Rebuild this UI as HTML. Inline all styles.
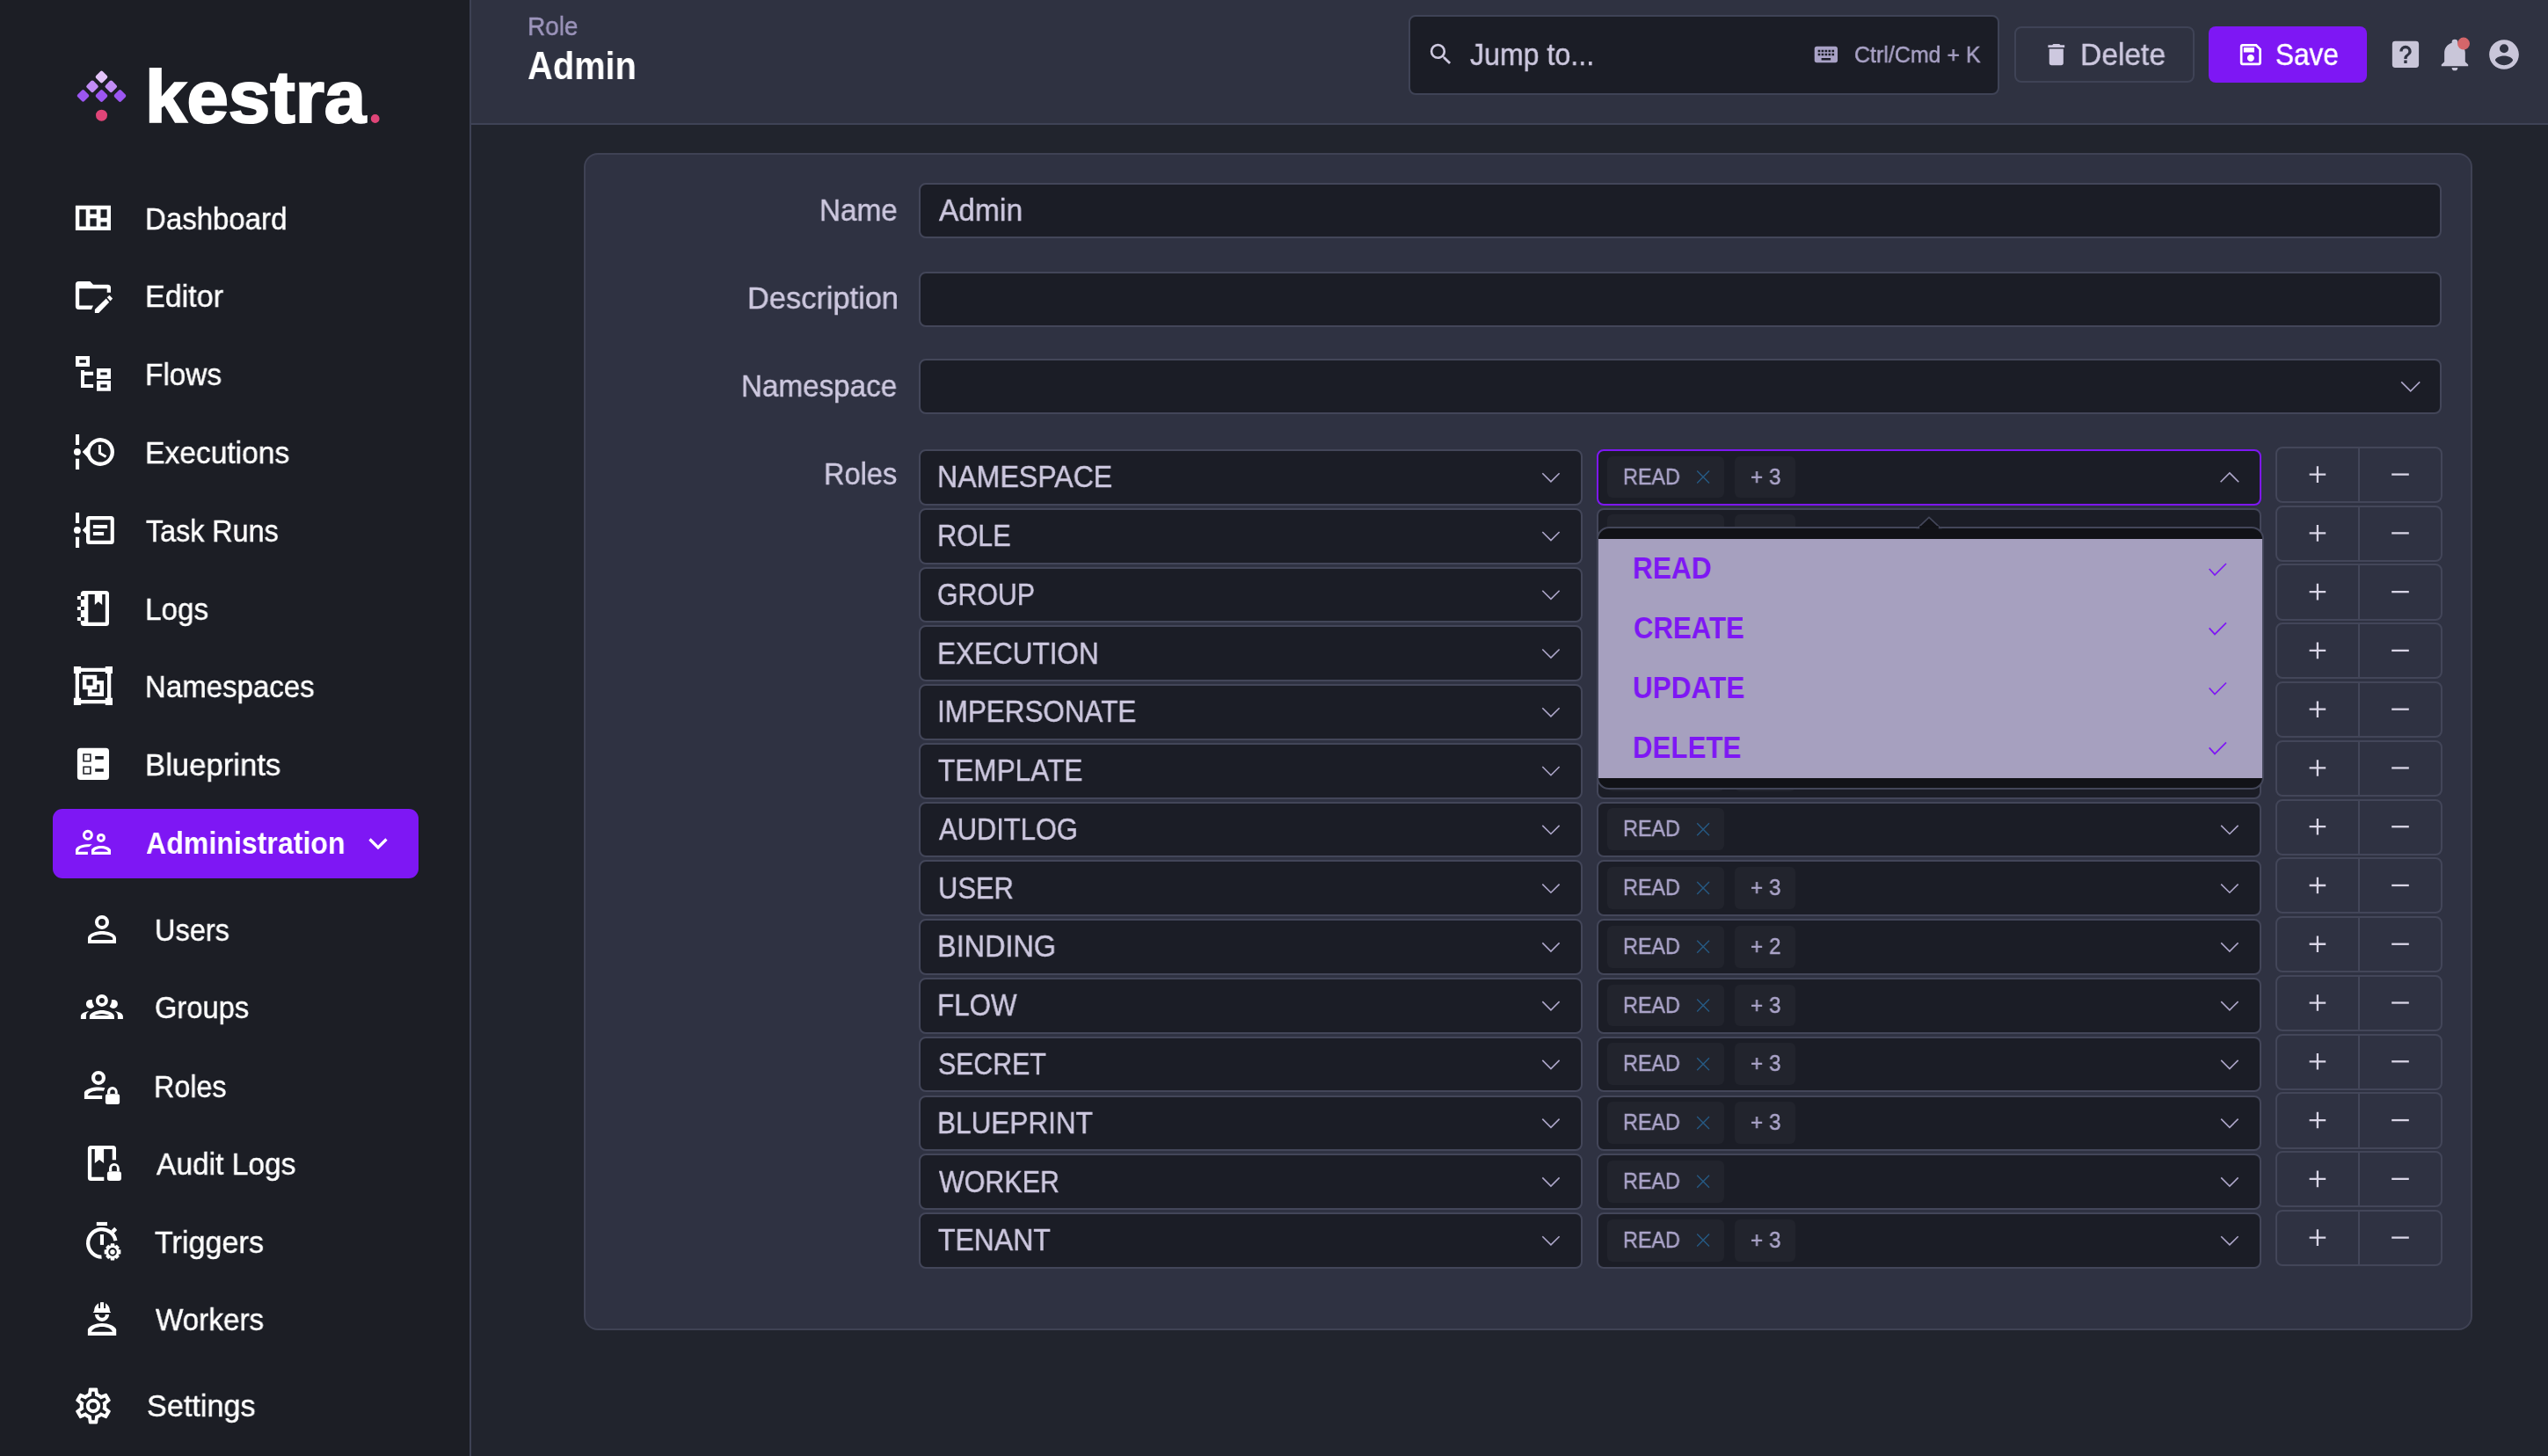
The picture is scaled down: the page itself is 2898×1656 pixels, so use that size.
<!DOCTYPE html>
<html><head><meta charset="utf-8"><style>
html,body{margin:0;padding:0;width:2898px;height:1656px;overflow:hidden;background:#21242d;}
.b{position:absolute;box-sizing:border-box;}
.t{position:absolute;white-space:pre;font-family:'Liberation Sans', sans-serif;transform-origin:0 0;z-index:5;will-change:transform;}
svg{position:absolute;left:0;top:0;}
</style></head><body>
<div class="b" style="left:0.00px;top:0.00px;width:536.00px;height:1656.00px;z-index:0;background:#1c1e25;"></div><div class="b" style="left:534.00px;top:0.00px;width:2.00px;height:1656.00px;z-index:1;background:#3d4154;"></div><div class="b" style="left:536.00px;top:0.00px;width:2362.00px;height:140.00px;z-index:0;background:#2f3241;"></div><div class="b" style="left:536.00px;top:140.00px;width:2362.00px;height:2.00px;z-index:1;background:#3f4356;"></div><div class="b" style="left:536.00px;top:142.00px;width:2362.00px;height:1514.00px;z-index:0;background:#21242d;"></div><div class="b" style="left:664.00px;top:174.00px;width:2148.00px;height:1339.00px;z-index:1;background:#2f3242;border:2px solid #3f4254;border-radius:16px;"></div><div class="b" style="left:1045.00px;top:208.40px;width:1732.30px;height:63.00px;z-index:2;background:#1b1d26;border:2px solid #434659;border-radius:8px;"></div><div class="b" style="left:1045.00px;top:308.50px;width:1732.30px;height:63.00px;z-index:2;background:#1b1d26;border:2px solid #434659;border-radius:8px;"></div><div class="b" style="left:1045.00px;top:408.40px;width:1732.30px;height:63.00px;z-index:2;background:#1b1d26;border:2px solid #434659;border-radius:8px;"></div><div class="b" style="left:1045.00px;top:511.10px;width:755.00px;height:63.70px;z-index:2;background:#1b1d26;border:2px solid #434659;border-radius:8px;"></div><div class="b" style="left:1816.00px;top:511.10px;width:756.00px;height:63.70px;z-index:2;background:#1b1d26;border:2px solid #7e17f4;border-radius:8px;"></div><div class="b" style="left:1828.20px;top:518.70px;width:132.50px;height:47.80px;z-index:3;background:#22242d;border-radius:6px;"></div><div class="b" style="left:1973.00px;top:518.70px;width:69.40px;height:47.80px;z-index:3;background:#22242d;border-radius:6px;"></div><div class="b" style="left:2588.20px;top:507.90px;width:190.30px;height:64.20px;z-index:2;background:#2f3242;border:2px solid #434659;border-radius:8px;"></div><div class="b" style="left:2682.00px;top:507.90px;width:2.00px;height:64.20px;z-index:3;background:#434659;"></div><div class="b" style="left:1045.00px;top:577.87px;width:755.00px;height:63.70px;z-index:2;background:#1b1d26;border:2px solid #434659;border-radius:8px;"></div><div class="b" style="left:1816.00px;top:577.87px;width:756.00px;height:63.70px;z-index:2;background:#1b1d26;border:2px solid #434659;border-radius:8px;"></div><div class="b" style="left:1828.20px;top:585.47px;width:132.50px;height:47.80px;z-index:3;background:#22242d;border-radius:6px;"></div><div class="b" style="left:1973.00px;top:585.47px;width:69.40px;height:47.80px;z-index:3;background:#22242d;border-radius:6px;"></div><div class="b" style="left:2588.20px;top:574.67px;width:190.30px;height:64.20px;z-index:2;background:#2f3242;border:2px solid #434659;border-radius:8px;"></div><div class="b" style="left:2682.00px;top:574.67px;width:2.00px;height:64.20px;z-index:3;background:#434659;"></div><div class="b" style="left:1045.00px;top:644.64px;width:755.00px;height:63.70px;z-index:2;background:#1b1d26;border:2px solid #434659;border-radius:8px;"></div><div class="b" style="left:1816.00px;top:644.64px;width:756.00px;height:63.70px;z-index:2;background:#1b1d26;border:2px solid #434659;border-radius:8px;"></div><div class="b" style="left:1828.20px;top:652.24px;width:132.50px;height:47.80px;z-index:3;background:#22242d;border-radius:6px;"></div><div class="b" style="left:1973.00px;top:652.24px;width:69.40px;height:47.80px;z-index:3;background:#22242d;border-radius:6px;"></div><div class="b" style="left:2588.20px;top:641.44px;width:190.30px;height:64.20px;z-index:2;background:#2f3242;border:2px solid #434659;border-radius:8px;"></div><div class="b" style="left:2682.00px;top:641.44px;width:2.00px;height:64.20px;z-index:3;background:#434659;"></div><div class="b" style="left:1045.00px;top:711.41px;width:755.00px;height:63.70px;z-index:2;background:#1b1d26;border:2px solid #434659;border-radius:8px;"></div><div class="b" style="left:1816.00px;top:711.41px;width:756.00px;height:63.70px;z-index:2;background:#1b1d26;border:2px solid #434659;border-radius:8px;"></div><div class="b" style="left:1828.20px;top:719.01px;width:132.50px;height:47.80px;z-index:3;background:#22242d;border-radius:6px;"></div><div class="b" style="left:1973.00px;top:719.01px;width:69.40px;height:47.80px;z-index:3;background:#22242d;border-radius:6px;"></div><div class="b" style="left:2588.20px;top:708.21px;width:190.30px;height:64.20px;z-index:2;background:#2f3242;border:2px solid #434659;border-radius:8px;"></div><div class="b" style="left:2682.00px;top:708.21px;width:2.00px;height:64.20px;z-index:3;background:#434659;"></div><div class="b" style="left:1045.00px;top:778.18px;width:755.00px;height:63.70px;z-index:2;background:#1b1d26;border:2px solid #434659;border-radius:8px;"></div><div class="b" style="left:1816.00px;top:778.18px;width:756.00px;height:63.70px;z-index:2;background:#1b1d26;border:2px solid #434659;border-radius:8px;"></div><div class="b" style="left:1828.20px;top:785.78px;width:132.50px;height:47.80px;z-index:3;background:#22242d;border-radius:6px;"></div><div class="b" style="left:1973.00px;top:785.78px;width:69.40px;height:47.80px;z-index:3;background:#22242d;border-radius:6px;"></div><div class="b" style="left:2588.20px;top:774.98px;width:190.30px;height:64.20px;z-index:2;background:#2f3242;border:2px solid #434659;border-radius:8px;"></div><div class="b" style="left:2682.00px;top:774.98px;width:2.00px;height:64.20px;z-index:3;background:#434659;"></div><div class="b" style="left:1045.00px;top:844.95px;width:755.00px;height:63.70px;z-index:2;background:#1b1d26;border:2px solid #434659;border-radius:8px;"></div><div class="b" style="left:1816.00px;top:844.95px;width:756.00px;height:63.70px;z-index:2;background:#1b1d26;border:2px solid #434659;border-radius:8px;"></div><div class="b" style="left:1828.20px;top:852.55px;width:132.50px;height:47.80px;z-index:3;background:#22242d;border-radius:6px;"></div><div class="b" style="left:1973.00px;top:852.55px;width:69.40px;height:47.80px;z-index:3;background:#22242d;border-radius:6px;"></div><div class="b" style="left:2588.20px;top:841.75px;width:190.30px;height:64.20px;z-index:2;background:#2f3242;border:2px solid #434659;border-radius:8px;"></div><div class="b" style="left:2682.00px;top:841.75px;width:2.00px;height:64.20px;z-index:3;background:#434659;"></div><div class="b" style="left:1045.00px;top:911.72px;width:755.00px;height:63.70px;z-index:2;background:#1b1d26;border:2px solid #434659;border-radius:8px;"></div><div class="b" style="left:1816.00px;top:911.72px;width:756.00px;height:63.70px;z-index:2;background:#1b1d26;border:2px solid #434659;border-radius:8px;"></div><div class="b" style="left:1828.20px;top:919.32px;width:132.50px;height:47.80px;z-index:3;background:#22242d;border-radius:6px;"></div><div class="b" style="left:2588.20px;top:908.52px;width:190.30px;height:64.20px;z-index:2;background:#2f3242;border:2px solid #434659;border-radius:8px;"></div><div class="b" style="left:2682.00px;top:908.52px;width:2.00px;height:64.20px;z-index:3;background:#434659;"></div><div class="b" style="left:1045.00px;top:978.49px;width:755.00px;height:63.70px;z-index:2;background:#1b1d26;border:2px solid #434659;border-radius:8px;"></div><div class="b" style="left:1816.00px;top:978.49px;width:756.00px;height:63.70px;z-index:2;background:#1b1d26;border:2px solid #434659;border-radius:8px;"></div><div class="b" style="left:1828.20px;top:986.09px;width:132.50px;height:47.80px;z-index:3;background:#22242d;border-radius:6px;"></div><div class="b" style="left:1973.00px;top:986.09px;width:69.40px;height:47.80px;z-index:3;background:#22242d;border-radius:6px;"></div><div class="b" style="left:2588.20px;top:975.29px;width:190.30px;height:64.20px;z-index:2;background:#2f3242;border:2px solid #434659;border-radius:8px;"></div><div class="b" style="left:2682.00px;top:975.29px;width:2.00px;height:64.20px;z-index:3;background:#434659;"></div><div class="b" style="left:1045.00px;top:1045.26px;width:755.00px;height:63.70px;z-index:2;background:#1b1d26;border:2px solid #434659;border-radius:8px;"></div><div class="b" style="left:1816.00px;top:1045.26px;width:756.00px;height:63.70px;z-index:2;background:#1b1d26;border:2px solid #434659;border-radius:8px;"></div><div class="b" style="left:1828.20px;top:1052.86px;width:132.50px;height:47.80px;z-index:3;background:#22242d;border-radius:6px;"></div><div class="b" style="left:1973.00px;top:1052.86px;width:69.40px;height:47.80px;z-index:3;background:#22242d;border-radius:6px;"></div><div class="b" style="left:2588.20px;top:1042.06px;width:190.30px;height:64.20px;z-index:2;background:#2f3242;border:2px solid #434659;border-radius:8px;"></div><div class="b" style="left:2682.00px;top:1042.06px;width:2.00px;height:64.20px;z-index:3;background:#434659;"></div><div class="b" style="left:1045.00px;top:1112.03px;width:755.00px;height:63.70px;z-index:2;background:#1b1d26;border:2px solid #434659;border-radius:8px;"></div><div class="b" style="left:1816.00px;top:1112.03px;width:756.00px;height:63.70px;z-index:2;background:#1b1d26;border:2px solid #434659;border-radius:8px;"></div><div class="b" style="left:1828.20px;top:1119.63px;width:132.50px;height:47.80px;z-index:3;background:#22242d;border-radius:6px;"></div><div class="b" style="left:1973.00px;top:1119.63px;width:69.40px;height:47.80px;z-index:3;background:#22242d;border-radius:6px;"></div><div class="b" style="left:2588.20px;top:1108.83px;width:190.30px;height:64.20px;z-index:2;background:#2f3242;border:2px solid #434659;border-radius:8px;"></div><div class="b" style="left:2682.00px;top:1108.83px;width:2.00px;height:64.20px;z-index:3;background:#434659;"></div><div class="b" style="left:1045.00px;top:1178.80px;width:755.00px;height:63.70px;z-index:2;background:#1b1d26;border:2px solid #434659;border-radius:8px;"></div><div class="b" style="left:1816.00px;top:1178.80px;width:756.00px;height:63.70px;z-index:2;background:#1b1d26;border:2px solid #434659;border-radius:8px;"></div><div class="b" style="left:1828.20px;top:1186.40px;width:132.50px;height:47.80px;z-index:3;background:#22242d;border-radius:6px;"></div><div class="b" style="left:1973.00px;top:1186.40px;width:69.40px;height:47.80px;z-index:3;background:#22242d;border-radius:6px;"></div><div class="b" style="left:2588.20px;top:1175.60px;width:190.30px;height:64.20px;z-index:2;background:#2f3242;border:2px solid #434659;border-radius:8px;"></div><div class="b" style="left:2682.00px;top:1175.60px;width:2.00px;height:64.20px;z-index:3;background:#434659;"></div><div class="b" style="left:1045.00px;top:1245.57px;width:755.00px;height:63.70px;z-index:2;background:#1b1d26;border:2px solid #434659;border-radius:8px;"></div><div class="b" style="left:1816.00px;top:1245.57px;width:756.00px;height:63.70px;z-index:2;background:#1b1d26;border:2px solid #434659;border-radius:8px;"></div><div class="b" style="left:1828.20px;top:1253.17px;width:132.50px;height:47.80px;z-index:3;background:#22242d;border-radius:6px;"></div><div class="b" style="left:1973.00px;top:1253.17px;width:69.40px;height:47.80px;z-index:3;background:#22242d;border-radius:6px;"></div><div class="b" style="left:2588.20px;top:1242.37px;width:190.30px;height:64.20px;z-index:2;background:#2f3242;border:2px solid #434659;border-radius:8px;"></div><div class="b" style="left:2682.00px;top:1242.37px;width:2.00px;height:64.20px;z-index:3;background:#434659;"></div><div class="b" style="left:1045.00px;top:1312.34px;width:755.00px;height:63.70px;z-index:2;background:#1b1d26;border:2px solid #434659;border-radius:8px;"></div><div class="b" style="left:1816.00px;top:1312.34px;width:756.00px;height:63.70px;z-index:2;background:#1b1d26;border:2px solid #434659;border-radius:8px;"></div><div class="b" style="left:1828.20px;top:1319.94px;width:132.50px;height:47.80px;z-index:3;background:#22242d;border-radius:6px;"></div><div class="b" style="left:2588.20px;top:1309.14px;width:190.30px;height:64.20px;z-index:2;background:#2f3242;border:2px solid #434659;border-radius:8px;"></div><div class="b" style="left:2682.00px;top:1309.14px;width:2.00px;height:64.20px;z-index:3;background:#434659;"></div><div class="b" style="left:1045.00px;top:1379.11px;width:755.00px;height:63.70px;z-index:2;background:#1b1d26;border:2px solid #434659;border-radius:8px;"></div><div class="b" style="left:1816.00px;top:1379.11px;width:756.00px;height:63.70px;z-index:2;background:#1b1d26;border:2px solid #434659;border-radius:8px;"></div><div class="b" style="left:1828.20px;top:1386.71px;width:132.50px;height:47.80px;z-index:3;background:#22242d;border-radius:6px;"></div><div class="b" style="left:1973.00px;top:1386.71px;width:69.40px;height:47.80px;z-index:3;background:#22242d;border-radius:6px;"></div><div class="b" style="left:2588.20px;top:1375.91px;width:190.30px;height:64.20px;z-index:2;background:#2f3242;border:2px solid #434659;border-radius:8px;"></div><div class="b" style="left:2682.00px;top:1375.91px;width:2.00px;height:64.20px;z-index:3;background:#434659;"></div><div class="b" style="left:60.00px;top:920.00px;width:416.00px;height:78.70px;z-index:1;background:#7e17f4;border-radius:11px;"></div><div class="b" style="left:1601.50px;top:16.50px;width:672.50px;height:91.20px;z-index:1;background:#1b1d26;border:2px solid #3f4356;border-radius:8px;"></div><div class="b" style="left:2291.20px;top:30.20px;width:204.80px;height:63.50px;z-index:1;background:#2f3241;border:2px solid #3f4356;border-radius:8px;"></div><div class="b" style="left:2512.00px;top:30.00px;width:180.00px;height:64.20px;z-index:1;background:#7e17f4;border-radius:8px;"></div><div class="b" style="left:1816.00px;top:598.60px;width:759.00px;height:299.90px;z-index:10;background:#111217;border:2px solid #434659;border-radius:14px;"></div><div class="b" style="left:1818.00px;top:612.80px;width:755.00px;height:272.20px;z-index:11;background:#a6a0bf;"></div>
<svg width="2898" height="1656" style="z-index:6"><path d="M85.9,233.8H126V262H85.9ZM90.3,238.2H97.7V257.6H90.3ZM102.4,238.2H109.7V243.6H102.4ZM102.4,248.3H109.7V257.6H102.4ZM114.5,238.2H121.6V247.7H114.5ZM114.5,252.4H121.6V257.6H114.5Z" fill="#fff" fill-rule="evenodd" /><path d="M89.5,319.9H102.4L106,323.7H122.5A3.5,3.5 0 0 1 126,327.2V332.8H121.7V328.2H90.2V347.6H106L104,351.9H89.5A3.6,3.6 0 0 1 85.9,348.3V323.5A3.6,3.6 0 0 1 89.5,319.9Z" fill="#fff" fill-rule="evenodd" /><path d="M107.9,351.9L120.7,339.6L124.2,343.7L112.3,356H107.9Z" fill="#fff" fill-rule="evenodd" /><path d="M121.7,338.2L124.5,335.8L128.1,339.4L125.5,342.4Z" fill="#fff" fill-rule="evenodd" /><path d="M86,405H102V417H86ZM90.3,409.3H97.9V412.7H90.3Z" fill="#fff" fill-rule="evenodd" /><path d="M92,421H96V422.8H106.1V427H96V436.9H106.1V440.9H92Z" fill="#fff" fill-rule="evenodd" /><path d="M110,418.9H126V430.9H110ZM114.3,423.4H121.7V426.6H114.3Z" fill="#fff" fill-rule="evenodd" /><path d="M110,433H126V444.8H110ZM114.3,437.3H121.7V440.7H114.3Z" fill="#fff" fill-rule="evenodd" /><path d="M86,494H90.1V506H86ZM86,521.8H90.1V534H86ZM83.95,514A3.95,3.95 0 1 0 91.85000000000001,514A3.95,3.95 0 1 0 83.95,514Z" fill="#fff" fill-rule="evenodd" /><path d="M93.7,514L99.3,508.2A15.9,15.9 0 1 1 99.3,519.8ZM102.5,514A11.6,11.6 0 1 0 125.69999999999999,514A11.6,11.6 0 1 0 102.5,514Z" fill="#fff" fill-rule="evenodd" /><path d="M111.9,506H115V514.6L121.3,518.3L119.8,520.8L111.9,516.2Z" fill="#fff" fill-rule="evenodd" /><path d="M86,583H90.1V595H86ZM86,610.8H90.1V623H86ZM83.95,602.9A3.95,3.95 0 1 0 91.85000000000001,602.9A3.95,3.95 0 1 0 83.95,602.9Z" fill="#fff" fill-rule="evenodd" /><path d="M101.5,586.9H126.3A3.5,3.5 0 0 1 129.8,590.4V615.4A3.5,3.5 0 0 1 126.3,618.9H101.5A3.5,3.5 0 0 1 98,615.4V607.2L93.7,602.9L98,598.6V590.4A3.5,3.5 0 0 1 101.5,586.9ZM102.3,591.2H125.7V614.7H102.3Z" fill="#fff" fill-rule="evenodd" /><path d="M105.9,596.9H122.1V601H105.9ZM105.9,605H118.1V609.1H105.9Z" fill="#fff" fill-rule="evenodd" /><path d="M95.3,672H120.5A3.5,3.5 0 0 1 124,675.5V708.5A3.5,3.5 0 0 1 120.5,712H95.3A3.5,3.5 0 0 1 91.8,708.5V675.5A3.5,3.5 0 0 1 95.3,672ZM100.3,676.1H119.8V707.7H100.3ZM92,678H95.8V681.9H92ZM92,690H95.8V694H92ZM92,702H95.8V706H92Z" fill="#fff" fill-rule="evenodd" /><path d="M87.9,678H92V681.9H87.9ZM87.9,690H92V694H87.9ZM87.9,702H92V706H87.9Z" fill="#fff" fill-rule="evenodd" /><path d="M107.8,676.1H116.2V688L111.9,684.2L107.8,688Z" fill="#fff" fill-rule="evenodd" /><path d="M83.9,757.9H92.1V766.1H83.9ZM119.8,757.9H128V766.1H119.8ZM83.9,793.8H92.1V802H83.9ZM119.8,793.8H128V802H119.8Z" fill="#fff" fill-rule="nonzero" /><path d="M92,759.7H120V764H92ZM92,796H120V800.2H92ZM85.7,766H90V794H85.7ZM122,766H126.25V794H122Z" fill="#fff" fill-rule="nonzero" /><path d="M99.8,774H118V792H99.8ZM104.6,778.5H113.4V787.4H104.6Z" fill="#fff" fill-rule="evenodd" /><path d="M93.9,767.75H110.2V784.2H93.9Z" fill="#fff" fill-rule="evenodd" /><path d="M98.4,772.4H105.5V779.5H98.4Z" fill="#1c1e25" fill-rule="evenodd" /><path d="M91.4,850.8H120.5A3.5,3.5 0 0 1 124,854.3V883.6A3.5,3.5 0 0 1 120.5,887.1H91.4A3.5,3.5 0 0 1 87.9,883.6V854.3A3.5,3.5 0 0 1 91.4,850.8ZM94.25,857.2H103.7V866.6H94.25ZM95.8,858.7H102.1V865.1H95.8ZM94.25,871.4H103.7V880.7H94.25ZM95.8,873H102.1V879.2H95.8ZM108.2,860.1H117.8V863.7H108.2ZM108.2,874.2H117.8V877.8H108.2Z" fill="#fff" fill-rule="evenodd" /><path d="M93.95,949.8A5.95,5.95 0 1 0 105.85000000000001,949.8A5.95,5.95 0 1 0 93.95,949.8ZM97.0,949.8A2.9,2.9 0 1 0 102.80000000000001,949.8A2.9,2.9 0 1 0 97.0,949.8Z" fill="#fff" fill-rule="evenodd" /><path d="M109.9,952.9A5.0,5.0 0 1 0 119.9,952.9A5.0,5.0 0 1 0 109.9,952.9ZM112.9,952.9A2.0,2.0 0 1 0 116.9,952.9A2.0,2.0 0 1 0 112.9,952.9Z" fill="#fff" fill-rule="evenodd" /><path d="M86,971.9V966.2C87.5,961.5 95,959.8 104.7,960.2L101.6,963C94,963.2 89.5,965 89,968.8H99.9V971.9Z" fill="#fff" fill-rule="evenodd" /><path d="M104,971.9V966.5C105.5,963.6 110,961.9 115,961.9C120,961.9 124.5,963.6 126,966.5V971.9Z M106.9,968.8H123.1C122,966.4 118.6,965.1 115,965.1C111.4,965.1 108,966.4 106.9,968.8Z" fill="#fff" fill-rule="evenodd" /><g transform="translate(92,1032.9) scale(2)"><path fill="#fff" fill-rule="evenodd" d="M12,4A4,4 0 0,1 16,8A4,4 0 0,1 12,12A4,4 0 0,1 8,8A4,4 0 0,1 12,4M12,6A2,2 0 0,0 10,8A2,2 0 0,0 12,10A2,2 0 0,0 14,8A2,2 0 0,0 12,6M12,13C14.67,13 20,14.33 20,17V20H4V17C4,14.33 9.33,13 12,13M12,14.9C9.03,14.9 5.9,16.36 5.9,17V18.1H18.1V17C18.1,16.36 14.97,14.9 12,14.9Z"/></g><g transform="translate(91.9,1120.9) scale(2)"><path fill="#fff" d="M12,5A3.5,3.5 0 0,0 8.5,8.5A3.5,3.5 0 0,0 12,12A3.5,3.5 0 0,0 15.5,8.5A3.5,3.5 0 0,0 12,5M12,7A1.5,1.5 0 0,1 13.5,8.5A1.5,1.5 0 0,1 12,10A1.5,1.5 0 0,1 10.5,8.5A1.5,1.5 0 0,1 12,7M5.5,8A2.5,2.5 0 0,0 3,10.5C3,11.44 3.53,12.25 4.29,12.68C4.65,12.88 5.06,13 5.5,13C5.94,13 6.35,12.88 6.71,12.68C7.08,12.47 7.39,12.17 7.62,11.81C6.89,10.86 6.5,9.7 6.5,8.5C6.5,8.41 6.5,8.31 6.5,8.22C6.2,8.08 5.86,8 5.5,8M18.5,8C18.14,8 17.8,8.08 17.5,8.22C17.5,8.31 17.5,8.41 17.5,8.5C17.5,9.7 17.11,10.86 16.38,11.81C16.5,12 16.63,12.15 16.78,12.3C16.94,12.45 17.1,12.58 17.29,12.68C17.65,12.88 18.06,13 18.5,13C18.94,13 19.35,12.88 19.71,12.68C20.47,12.25 21,11.44 21,10.5A2.5,2.5 0 0,0 18.5,8M12,14C9.66,14 5,15.17 5,17.5V19H19V17.5C19,15.17 14.34,14 12,14M4.71,14.55C2.78,14.78 0,15.76 0,17.5V19H3V17.07C3,16.06 3.69,15.22 4.71,14.55M19.29,14.55C20.31,15.22 21,16.06 21,17.07V19H24V17.5C24,15.76 21.22,14.78 19.29,14.55M12,16C13.53,16 15.24,16.5 16.23,17H7.77C8.76,16.5 10.47,16 12,16Z"/></g><path d="M104,1225.9A8,8 0 1 0 120,1225.9A8,8 0 1 0 104,1225.9ZM108.2,1225.9A3.8,3.8 0 1 0 115.8,1225.9A3.8,3.8 0 1 0 108.2,1225.9Z" fill="#fff" fill-rule="evenodd" /><path d="M95.9,1249.9V1242.2C98,1238.5 105,1236.6 112,1236.6C114.5,1236.6 117,1236.9 119.4,1237.2L117.9,1240.7C116,1240.5 114,1240.4 112,1240.4C106,1240.4 100.5,1242.5 99.8,1246H116.2V1249.9Z" fill="#fff" fill-rule="evenodd" /><path d="M122.4,1244.3H133.6A2.5,2.5 0 0 1 136.1,1246.8V1253.5A2.5,2.5 0 0 1 133.6,1256H122.4A2.5,2.5 0 0 1 119.9,1253.5V1246.8A2.5,2.5 0 0 1 122.4,1244.3Z" fill="#fff" fill-rule="evenodd" /><path d="M122,1244.3V1241.8A5.85,5.85 0 0 1 133.7,1241.8V1244.3H130.8V1242A2.75,2.75 0 0 0 125.3,1242V1244.3Z" fill="#fff" fill-rule="evenodd" /><path d="M103.4,1303H128.5A3.5,3.5 0 0 1 132,1306.5V1319.3H127.7V1307.1H104.2V1338.7H118.3V1343H103.4A3.5,3.5 0 0 1 99.9,1339.5V1306.5A3.5,3.5 0 0 1 103.4,1303Z" fill="#fff" fill-rule="evenodd" /><path d="M107.8,1307.1H118.1V1323L113,1319L107.8,1323Z" fill="#fff" fill-rule="evenodd" /><path d="M124.9,1332.3H135A3,3 0 0 1 138,1335.3V1340A3,3 0 0 1 135,1343H124.9A3,3 0 0 1 121.9,1340V1335.3A3,3 0 0 1 124.9,1332.3Z" fill="#fff" fill-rule="evenodd" /><path d="M124,1332.3V1328.9A5.9,5.9 0 0 1 135.8,1328.9V1332.3H132.9V1328.7A2.85,2.85 0 0 0 127.2,1328.7V1332.3Z" fill="#fff" fill-rule="evenodd" /><path d="M109.8,1389.9H122V1394H109.8Z" fill="#fff" fill-rule="evenodd" /><path d="M115.7,1431.8A17.9,17.9 0 1 1 133.5,1410.7L129.4,1411.5A13.7,13.7 0 1 0 115.3,1427.6Z" fill="#fff" fill-rule="evenodd" /><path d="M126.4,1399.5L130.2,1395.8L133.2,1399L129.5,1402.7Z" fill="#fff" fill-rule="evenodd" /><path d="M113.9,1404H118V1415.9H113.9Z" fill="#fff" fill-rule="evenodd" /><g transform="translate(113.6,1409.5) scale(1.2)"><path fill="#fff" fill-rule="evenodd" d="M12,8A4,4 0 0,1 16,12A4,4 0 0,1 12,16A4,4 0 0,1 8,12A4,4 0 0,1 12,8Z M12,9.7A2.3,2.3 0 1 0 12,14.3A2.3,2.3 0 1 0 12,9.7Z M10.3,4H13.7L14.2,6.4L16.1,5.3L18.5,7.7L17.4,9.6L19.8,10.1V13.9L17.4,14.4L18.5,16.3L16.1,18.7L14.2,17.6L13.7,20H10.3L9.8,17.6L7.9,18.7L5.5,16.3L6.6,14.4L4.2,13.9V10.1L6.6,9.6L5.5,7.7L7.9,5.3L9.8,6.4Z"/></g><path d="M105.7,1492.9L107,1491.3A9.7,10.5 0 0 1 112.1,1482.3V1488H114V1481.2A10,10 0 0 1 118.1,1481.2V1488H120V1482.3A9.7,10.5 0 0 1 125,1491.3L126.2,1492.9Z" fill="#fff" fill-rule="evenodd" /><path d="M108,1494.9H112.3A3.75,3.75 0 0 0 119.8,1494.9H124.1A8.05,8.05 0 0 1 108,1494.9Z" fill="#fff" fill-rule="evenodd" /><path d="M99.9,1519.1V1512C101.5,1507.8 108.5,1504.9 116,1504.9C123.5,1504.9 130.6,1507.8 132.2,1512V1519.1Z M104,1514.8H127.9C127,1511.3 121.8,1509 116,1509C110.2,1509 105,1511.3 104,1514.8Z" fill="#fff" fill-rule="evenodd" /><g transform="translate(81.5,1574.5) scale(2.04)"><path fill="#fff" d="M12,8A4,4 0 0,1 16,12A4,4 0 0,1 12,16A4,4 0 0,1 8,12A4,4 0 0,1 12,8M12,10A2,2 0 0,0 10,12A2,2 0 0,0 12,14A2,2 0 0,0 14,12A2,2 0 0,0 12,10M10,22C9.75,22 9.54,21.82 9.5,21.58L9.13,18.93C8.5,18.68 7.96,18.34 7.44,17.94L4.95,18.95C4.73,19.03 4.46,18.95 4.34,18.73L2.34,15.27C2.21,15.05 2.27,14.78 2.46,14.63L4.57,12.97L4.5,12L4.57,11L2.46,9.37C2.27,9.22 2.21,8.95 2.34,8.73L4.34,5.27C4.46,5.05 4.73,4.96 4.95,5.05L7.44,6.05C7.96,5.66 8.5,5.32 9.13,5.07L9.5,2.42C9.54,2.18 9.75,2 10,2H14C14.25,2 14.46,2.18 14.5,2.42L14.87,5.07C15.5,5.32 16.04,5.66 16.56,6.05L19.05,5.05C19.27,4.96 19.54,5.05 19.66,5.27L21.66,8.73C21.79,8.95 21.73,9.22 21.54,9.37L19.43,11L19.5,12L19.43,13L21.54,14.63C21.73,14.78 21.79,15.05 21.66,15.27L19.66,18.73C19.54,18.95 19.27,19.04 19.05,18.95L16.56,17.95C16.04,18.34 15.5,18.68 14.87,18.93L14.5,21.58C14.46,21.82 14.25,22 14,22H10M11.25,4L10.88,6.61C9.68,6.86 8.62,7.5 7.85,8.39L5.44,7.35L4.69,8.65L6.8,10.2C6.4,11.37 6.4,12.64 6.8,13.8L4.68,15.36L5.43,16.66L7.86,15.62C8.63,16.5 9.68,17.14 10.87,17.38L11.24,20H12.76L13.13,17.39C14.32,17.14 15.37,16.5 16.14,15.62L18.57,16.66L19.32,15.36L17.2,13.81C17.6,12.64 17.6,11.37 17.2,10.2L19.31,8.65L18.56,7.35L16.15,8.39C15.38,7.5 14.32,6.86 13.12,6.62L12.75,4H11.25Z"/></g><path d="M420.5,954.5L430,964L439.5,954.5" fill="none" stroke="#fff" stroke-width="3.2" /><g transform="translate(1622.8,45.8) scale(1.33)"><path fill="#cdc8df" d="M9.5,3A6.5,6.5 0 0,1 16,9.5C16,11.11 15.41,12.59 14.44,13.73L14.71,14H15.5L20.5,19L19,20.5L14,15.5V14.71L13.73,14.44C12.59,15.41 11.11,16 9.5,16A6.5,6.5 0 0,1 3,9.5A6.5,6.5 0 0,1 9.5,3M9.5,5C7,5 5,7 5,9.5C5,12 7,14 9.5,14C12,14 14,12 14,9.5C14,7 12,5 9.5,5Z"/></g><g transform="translate(2061.1,46.2) scale(1.315)"><path fill="#a9a2c6" d="M19,10H17V8H19M19,13H17V11H19M16,10H14V8H16M16,13H14V11H16M16,17H8V15H16M7,10H5V8H7M7,13H5V11H7M8,11H10V13H8M8,8H10V10H8M11,11H13V13H11M11,8H13V10H11M20,5H4C2.89,5 2,5.89 2,7V17A2,2 0 0,0 4,19H20A2,2 0 0,0 22,17V7C22,5.89 21.1,5 20,5Z"/></g><g transform="translate(2322.7,46) scale(1.34)"><path fill="#cdc8df" d="M19,4H15.5L14.5,3H9.5L8.5,4H5V6H19M6,19A2,2 0 0,0 8,21H16A2,2 0 0,0 18,19V7H6V19Z"/></g><g transform="translate(2543.8,46) scale(1.34)"><path fill="#fff" d="M17 3H5C3.89 3 3 3.9 3 5V19C3 20.1 3.89 21 5 21H19C20.1 21 21 20.1 21 19V7L17 3M19 19H5V5H16.17L19 7.83V19M12 12C10.34 12 9 13.34 9 15S10.34 18 12 18 15 16.66 15 15 13.66 12 12 12M6 6H15V10H6V6Z"/></g><g transform="translate(2715.8,41.7) scale(1.68)"><path fill="#c9c6d9" fill-rule="evenodd" d="M5,3H19A2,2 0 0,1 21,5V19A2,2 0 0,1 19,21H5A2,2 0 0,1 3,19V5A2,2 0 0,1 5,3Z M11,18H13V16H11V18Z M12,6A4,4 0 0,0 8,10H10A2,2 0 0,1 12,8A2,2 0 0,1 14,10C14,12 11,11.75 11,15H13C13,12.75 16,12.5 16,10A4,4 0 0,0 12,6Z"/></g><g transform="translate(2771.7,41.4) scale(1.69)"><path fill="#c9c6d9" d="M21,19V20H3V19L5,17V11C5,7.9 7.03,5.17 10,4.29C10,4.19 10,4.1 10,4A2,2 0 0,1 12,2A2,2 0 0,1 14,4C14,4.1 14,4.19 14,4.29C16.97,5.17 19,7.9 19,11V17L21,19M14,21A2,2 0 0,1 12,23A2,2 0 0,1 10,21"/></g><path d="M2795,49.6A7,7 0 1 0 2809,49.6A7,7 0 1 0 2795,49.6Z" fill="#d4666a" fill-rule="evenodd" /><g transform="translate(2827.8,41.8) scale(1.685)"><path fill="#c9c6d9" d="M12,19.2C9.5,19.2 7.29,17.92 6,16C6.03,14 10,12.9 12,12.9C14,12.9 17.97,14 18,16C16.71,17.92 14.5,19.2 12,19.2M12,5A3,3 0 0,1 15,8A3,3 0 0,1 12,11A3,3 0 0,1 9,8A3,3 0 0,1 12,5M12,2A10,10 0 0,0 2,12A10,10 0 0,0 12,22A10,10 0 0,0 22,12C22,6.47 17.5,2 12,2Z"/></g><path d="M2731.2,434.4L2741.7,444.9L2752.2,434.4" fill="none" stroke="#aea7ca" stroke-width="1.6" /><path d="M1754.3,538.20L1763.95,547.85L1773.6,538.20" fill="none" stroke="#aea7ca" stroke-width="1.6" /><path d="M2525.6,548.20L2535.9,537.90L2546.2,548.20" fill="none" stroke="#aea7ca" stroke-width="1.6" /><path d="M1930.2,535.60L1944,549.60M1944,535.60L1930.2,549.60" fill="none" stroke="#265a84" stroke-width="1.4" /><path d="M2626.6,539.60H2645.2M2635.9,530.30V548.90" fill="none" stroke="#d9d5e6" stroke-width="2.3" /><path d="M2720.2,539.60H2739.8" fill="none" stroke="#d9d5e6" stroke-width="2.3" /><path d="M1754.3,604.97L1763.95,614.62L1773.6,604.97" fill="none" stroke="#aea7ca" stroke-width="1.6" /><path d="M2626.6,606.37H2645.2M2635.9,597.07V615.67" fill="none" stroke="#d9d5e6" stroke-width="2.3" /><path d="M2720.2,606.37H2739.8" fill="none" stroke="#d9d5e6" stroke-width="2.3" /><path d="M1754.3,671.74L1763.95,681.39L1773.6,671.74" fill="none" stroke="#aea7ca" stroke-width="1.6" /><path d="M2626.6,673.14H2645.2M2635.9,663.84V682.44" fill="none" stroke="#d9d5e6" stroke-width="2.3" /><path d="M2720.2,673.14H2739.8" fill="none" stroke="#d9d5e6" stroke-width="2.3" /><path d="M1754.3,738.51L1763.95,748.16L1773.6,738.51" fill="none" stroke="#aea7ca" stroke-width="1.6" /><path d="M2626.6,739.91H2645.2M2635.9,730.61V749.21" fill="none" stroke="#d9d5e6" stroke-width="2.3" /><path d="M2720.2,739.91H2739.8" fill="none" stroke="#d9d5e6" stroke-width="2.3" /><path d="M1754.3,805.28L1763.95,814.93L1773.6,805.28" fill="none" stroke="#aea7ca" stroke-width="1.6" /><path d="M2626.6,806.68H2645.2M2635.9,797.38V815.98" fill="none" stroke="#d9d5e6" stroke-width="2.3" /><path d="M2720.2,806.68H2739.8" fill="none" stroke="#d9d5e6" stroke-width="2.3" /><path d="M1754.3,872.05L1763.95,881.70L1773.6,872.05" fill="none" stroke="#aea7ca" stroke-width="1.6" /><path d="M2626.6,873.45H2645.2M2635.9,864.15V882.75" fill="none" stroke="#d9d5e6" stroke-width="2.3" /><path d="M2720.2,873.45H2739.8" fill="none" stroke="#d9d5e6" stroke-width="2.3" /><path d="M1754.3,938.82L1763.95,948.47L1773.6,938.82" fill="none" stroke="#aea7ca" stroke-width="1.6" /><path d="M2526.2,938.82L2535.9,948.47L2545.6,938.82" fill="none" stroke="#aea7ca" stroke-width="1.6" /><path d="M1930.2,936.22L1944,950.22M1944,936.22L1930.2,950.22" fill="none" stroke="#265a84" stroke-width="1.4" /><path d="M2626.6,940.22H2645.2M2635.9,930.92V949.52" fill="none" stroke="#d9d5e6" stroke-width="2.3" /><path d="M2720.2,940.22H2739.8" fill="none" stroke="#d9d5e6" stroke-width="2.3" /><path d="M1754.3,1005.59L1763.95,1015.24L1773.6,1005.59" fill="none" stroke="#aea7ca" stroke-width="1.6" /><path d="M2526.2,1005.59L2535.9,1015.24L2545.6,1005.59" fill="none" stroke="#aea7ca" stroke-width="1.6" /><path d="M1930.2,1002.99L1944,1016.99M1944,1002.99L1930.2,1016.99" fill="none" stroke="#265a84" stroke-width="1.4" /><path d="M2626.6,1006.99H2645.2M2635.9,997.69V1016.29" fill="none" stroke="#d9d5e6" stroke-width="2.3" /><path d="M2720.2,1006.99H2739.8" fill="none" stroke="#d9d5e6" stroke-width="2.3" /><path d="M1754.3,1072.36L1763.95,1082.01L1773.6,1072.36" fill="none" stroke="#aea7ca" stroke-width="1.6" /><path d="M2526.2,1072.36L2535.9,1082.01L2545.6,1072.36" fill="none" stroke="#aea7ca" stroke-width="1.6" /><path d="M1930.2,1069.76L1944,1083.76M1944,1069.76L1930.2,1083.76" fill="none" stroke="#265a84" stroke-width="1.4" /><path d="M2626.6,1073.76H2645.2M2635.9,1064.46V1083.06" fill="none" stroke="#d9d5e6" stroke-width="2.3" /><path d="M2720.2,1073.76H2739.8" fill="none" stroke="#d9d5e6" stroke-width="2.3" /><path d="M1754.3,1139.13L1763.95,1148.78L1773.6,1139.13" fill="none" stroke="#aea7ca" stroke-width="1.6" /><path d="M2526.2,1139.13L2535.9,1148.78L2545.6,1139.13" fill="none" stroke="#aea7ca" stroke-width="1.6" /><path d="M1930.2,1136.53L1944,1150.53M1944,1136.53L1930.2,1150.53" fill="none" stroke="#265a84" stroke-width="1.4" /><path d="M2626.6,1140.53H2645.2M2635.9,1131.23V1149.83" fill="none" stroke="#d9d5e6" stroke-width="2.3" /><path d="M2720.2,1140.53H2739.8" fill="none" stroke="#d9d5e6" stroke-width="2.3" /><path d="M1754.3,1205.90L1763.95,1215.55L1773.6,1205.90" fill="none" stroke="#aea7ca" stroke-width="1.6" /><path d="M2526.2,1205.90L2535.9,1215.55L2545.6,1205.90" fill="none" stroke="#aea7ca" stroke-width="1.6" /><path d="M1930.2,1203.30L1944,1217.30M1944,1203.30L1930.2,1217.30" fill="none" stroke="#265a84" stroke-width="1.4" /><path d="M2626.6,1207.30H2645.2M2635.9,1198.00V1216.60" fill="none" stroke="#d9d5e6" stroke-width="2.3" /><path d="M2720.2,1207.30H2739.8" fill="none" stroke="#d9d5e6" stroke-width="2.3" /><path d="M1754.3,1272.67L1763.95,1282.32L1773.6,1272.67" fill="none" stroke="#aea7ca" stroke-width="1.6" /><path d="M2526.2,1272.67L2535.9,1282.32L2545.6,1272.67" fill="none" stroke="#aea7ca" stroke-width="1.6" /><path d="M1930.2,1270.07L1944,1284.07M1944,1270.07L1930.2,1284.07" fill="none" stroke="#265a84" stroke-width="1.4" /><path d="M2626.6,1274.07H2645.2M2635.9,1264.77V1283.37" fill="none" stroke="#d9d5e6" stroke-width="2.3" /><path d="M2720.2,1274.07H2739.8" fill="none" stroke="#d9d5e6" stroke-width="2.3" /><path d="M1754.3,1339.44L1763.95,1349.09L1773.6,1339.44" fill="none" stroke="#aea7ca" stroke-width="1.6" /><path d="M2526.2,1339.44L2535.9,1349.09L2545.6,1339.44" fill="none" stroke="#aea7ca" stroke-width="1.6" /><path d="M1930.2,1336.84L1944,1350.84M1944,1336.84L1930.2,1350.84" fill="none" stroke="#265a84" stroke-width="1.4" /><path d="M2626.6,1340.84H2645.2M2635.9,1331.54V1350.14" fill="none" stroke="#d9d5e6" stroke-width="2.3" /><path d="M2720.2,1340.84H2739.8" fill="none" stroke="#d9d5e6" stroke-width="2.3" /><path d="M1754.3,1406.21L1763.95,1415.86L1773.6,1406.21" fill="none" stroke="#aea7ca" stroke-width="1.6" /><path d="M2526.2,1406.21L2535.9,1415.86L2545.6,1406.21" fill="none" stroke="#aea7ca" stroke-width="1.6" /><path d="M1930.2,1403.61L1944,1417.61M1944,1403.61L1930.2,1417.61" fill="none" stroke="#265a84" stroke-width="1.4" /><path d="M2626.6,1407.61H2645.2M2635.9,1398.31V1416.91" fill="none" stroke="#d9d5e6" stroke-width="2.3" /><path d="M2720.2,1407.61H2739.8" fill="none" stroke="#d9d5e6" stroke-width="2.3" /><rect x="110.13" y="82.13" width="10.75" height="10.75" rx="2" fill="#e3c3f9" transform="rotate(45 115.5 87.5)"/><rect x="99.63" y="92.93" width="10.75" height="10.75" rx="2" fill="#c18cf5" transform="rotate(45 105 98.3)"/><rect x="120.93" y="92.93" width="10.75" height="10.75" rx="2" fill="#c18cf5" transform="rotate(45 126.3 98.3)"/><rect x="89.13" y="103.53" width="10.75" height="10.75" rx="2" fill="#9c56f2" transform="rotate(45 94.5 108.9)"/><rect x="110.13" y="103.63" width="10.75" height="10.75" rx="2" fill="#9c56f2" transform="rotate(45 115.5 109)"/><rect x="131.13" y="103.63" width="10.75" height="10.75" rx="2" fill="#9c56f2" transform="rotate(45 136.5 109)"/><path d="M109.0,131.2A6.5,6.5 0 1 0 122.0,131.2A6.5,6.5 0 1 0 109.0,131.2Z" fill="#e04578" fill-rule="evenodd" /><path d="M421.8,135A4.9,4.9 0 1 0 431.59999999999997,135A4.9,4.9 0 1 0 421.8,135Z" fill="#e04578" fill-rule="evenodd" /></svg>
<div class="t" style="left:165.21px;top:232.20px;font-size:35.5px;line-height:35.5px;font-weight:normal;color:#ffffff;z-index:5;transform:scaleX(0.9296);-webkit-text-stroke:0.45px #ffffff">Dashboard</div><div class="t" style="left:165.12px;top:320.40px;font-size:35.5px;line-height:35.5px;font-weight:normal;color:#ffffff;z-index:5;transform:scaleX(0.9589);-webkit-text-stroke:0.45px #ffffff">Editor</div><div class="t" style="left:165.18px;top:409.40px;font-size:35.5px;line-height:35.5px;font-weight:normal;color:#ffffff;z-index:5;transform:scaleX(0.9393);-webkit-text-stroke:0.45px #ffffff">Flows</div><div class="t" style="left:165.16px;top:498.30px;font-size:35.5px;line-height:35.5px;font-weight:normal;color:#ffffff;z-index:5;transform:scaleX(0.9453);-webkit-text-stroke:0.45px #ffffff">Executions</div><div class="t" style="left:166.10px;top:587.00px;font-size:35.5px;line-height:35.5px;font-weight:normal;color:#ffffff;z-index:5;transform:scaleX(0.9097);-webkit-text-stroke:0.45px #ffffff">Task Runs</div><div class="t" style="left:165.39px;top:676.00px;font-size:35.5px;line-height:35.5px;font-weight:normal;color:#ffffff;z-index:5;transform:scaleX(0.9370);-webkit-text-stroke:0.45px #ffffff">Logs</div><div class="t" style="left:165.21px;top:764.20px;font-size:35.5px;line-height:35.5px;font-weight:normal;color:#ffffff;z-index:5;transform:scaleX(0.9296);-webkit-text-stroke:0.45px #ffffff">Namespaces</div><div class="t" style="left:165.07px;top:853.40px;font-size:35.5px;line-height:35.5px;font-weight:normal;color:#ffffff;z-index:5;transform:scaleX(0.9779);-webkit-text-stroke:0.45px #ffffff">Blueprints</div><div class="t" style="left:166.10px;top:942.40px;font-size:35.5px;line-height:35.5px;font-weight:bold;color:#ffffff;z-index:5;transform:scaleX(0.9048)">Administration</div><div class="t" style="left:176.27px;top:1041.00px;font-size:35.5px;line-height:35.5px;font-weight:normal;color:#ffffff;z-index:5;transform:scaleX(0.9156);-webkit-text-stroke:0.45px #ffffff">Users</div><div class="t" style="left:176.08px;top:1129.00px;font-size:35.5px;line-height:35.5px;font-weight:normal;color:#ffffff;z-index:5;transform:scaleX(0.9200);-webkit-text-stroke:0.45px #ffffff">Groups</div><div class="t" style="left:175.37px;top:1218.50px;font-size:35.5px;line-height:35.5px;font-weight:normal;color:#ffffff;z-index:5;transform:scaleX(0.9092);-webkit-text-stroke:0.45px #ffffff">Roles</div><div class="t" style="left:177.50px;top:1307.00px;font-size:35.5px;line-height:35.5px;font-weight:normal;color:#ffffff;z-index:5;transform:scaleX(0.9443);-webkit-text-stroke:0.45px #ffffff">Audit Logs</div><div class="t" style="left:176.30px;top:1396.00px;font-size:35.5px;line-height:35.5px;font-weight:normal;color:#ffffff;z-index:5;transform:scaleX(0.9617);-webkit-text-stroke:0.45px #ffffff">Triggers</div><div class="t" style="left:176.80px;top:1484.20px;font-size:35.5px;line-height:35.5px;font-weight:normal;color:#ffffff;z-index:5;transform:scaleX(0.9359);-webkit-text-stroke:0.45px #ffffff">Workers</div><div class="t" style="left:166.74px;top:1582.30px;font-size:35.5px;line-height:35.5px;font-weight:normal;color:#ffffff;z-index:5;transform:scaleX(0.9635);-webkit-text-stroke:0.45px #ffffff">Settings</div><div class="t" style="left:599.93px;top:14.63px;font-size:29.9px;line-height:29.9px;font-weight:normal;color:#9d95bc;z-index:5;transform:scaleX(0.9356);-webkit-text-stroke:0.45px #9d95bc">Role</div><div class="t" style="left:599.69px;top:52.99px;font-size:43.8px;line-height:43.8px;font-weight:bold;color:#ffffff;z-index:5;transform:scaleX(0.9090)">Admin</div><div class="t" style="left:1671.80px;top:44.02px;font-size:35px;line-height:35px;font-weight:normal;color:#cdc8df;z-index:5;transform:scaleX(0.9185);-webkit-text-stroke:0.45px #cdc8df">Jump to...</div><div class="t" style="left:2108.94px;top:49.03px;font-size:26px;line-height:26px;font-weight:normal;color:#aaa3c7;z-index:5;transform:scaleX(0.9601);-webkit-text-stroke:0.45px #aaa3c7">Ctrl/Cmd + K</div><div class="t" style="left:2366.14px;top:43.86px;font-size:35.2px;line-height:35.2px;font-weight:normal;color:#cdc8df;z-index:5;transform:scaleX(0.9541);-webkit-text-stroke:0.45px #cdc8df">Delete</div><div class="t" style="left:2588.11px;top:43.86px;font-size:35.2px;line-height:35.2px;font-weight:normal;color:#ffffff;z-index:5;transform:scaleX(0.8949);-webkit-text-stroke:0.45px #ffffff">Save</div><div class="t" style="left:932.38px;top:222.49px;font-size:35.4px;line-height:35.4px;font-weight:normal;color:#cdc8df;z-index:5;transform:scaleX(0.9400);-webkit-text-stroke:0.45px #cdc8df">Name</div><div class="t" style="left:849.79px;top:322.49px;font-size:35.4px;line-height:35.4px;font-weight:normal;color:#cdc8df;z-index:5;transform:scaleX(0.9715);-webkit-text-stroke:0.45px #cdc8df">Description</div><div class="t" style="left:843.44px;top:422.29px;font-size:35.4px;line-height:35.4px;font-weight:normal;color:#cdc8df;z-index:5;transform:scaleX(0.9381);-webkit-text-stroke:0.45px #cdc8df">Namespace</div><div class="t" style="left:936.94px;top:522.39px;font-size:35.4px;line-height:35.4px;font-weight:normal;color:#cdc8df;z-index:5;transform:scaleX(0.9207);-webkit-text-stroke:0.45px #cdc8df">Roles</div><div class="t" style="left:1067.90px;top:222.49px;font-size:35.4px;line-height:35.4px;font-weight:normal;color:#cdc8df;z-index:5;transform:scaleX(0.9465);-webkit-text-stroke:0.45px #cdc8df">Admin</div><div class="t" style="left:1065.59px;top:525.30px;font-size:35.5px;line-height:35.5px;font-weight:normal;color:#cdc8df;z-index:5;transform:scaleX(0.9046);-webkit-text-stroke:0.45px #cdc8df">NAMESPACE</div><div class="t" style="left:1845.59px;top:529.60px;font-size:25.8px;line-height:25.8px;font-weight:normal;color:#aba4c9;z-index:5;transform:scaleX(0.9058);-webkit-text-stroke:0.45px #aba4c9">READ</div><div class="t" style="left:1990.66px;top:529.60px;font-size:25.8px;line-height:25.8px;font-weight:normal;color:#aba4c9;z-index:5;transform:scaleX(0.9429);-webkit-text-stroke:0.45px #aba4c9">+ 3</div><div class="t" style="left:1065.70px;top:592.07px;font-size:35.5px;line-height:35.5px;font-weight:normal;color:#cdc8df;z-index:5;transform:scaleX(0.8656);-webkit-text-stroke:0.45px #cdc8df">ROLE</div><div class="t" style="left:1066.35px;top:658.84px;font-size:35.5px;line-height:35.5px;font-weight:normal;color:#cdc8df;z-index:5;transform:scaleX(0.8531);-webkit-text-stroke:0.45px #cdc8df">GROUP</div><div class="t" style="left:1065.64px;top:725.61px;font-size:35.5px;line-height:35.5px;font-weight:normal;color:#cdc8df;z-index:5;transform:scaleX(0.8866);-webkit-text-stroke:0.45px #cdc8df">EXECUTION</div><div class="t" style="left:1065.65px;top:792.38px;font-size:35.5px;line-height:35.5px;font-weight:normal;color:#cdc8df;z-index:5;transform:scaleX(0.8849);-webkit-text-stroke:0.45px #cdc8df">IMPERSONATE</div><div class="t" style="left:1067.20px;top:859.15px;font-size:35.5px;line-height:35.5px;font-weight:normal;color:#cdc8df;z-index:5;transform:scaleX(0.8897);-webkit-text-stroke:0.45px #cdc8df">TEMPLATE</div><div class="t" style="left:1068.30px;top:925.92px;font-size:35.5px;line-height:35.5px;font-weight:normal;color:#cdc8df;z-index:5;transform:scaleX(0.8704);-webkit-text-stroke:0.45px #cdc8df">AUDITLOG</div><div class="t" style="left:1845.59px;top:930.22px;font-size:25.8px;line-height:25.8px;font-weight:normal;color:#aba4c9;z-index:5;transform:scaleX(0.9058);-webkit-text-stroke:0.45px #aba4c9">READ</div><div class="t" style="left:1066.56px;top:992.69px;font-size:35.5px;line-height:35.5px;font-weight:normal;color:#cdc8df;z-index:5;transform:scaleX(0.8705);-webkit-text-stroke:0.45px #cdc8df">USER</div><div class="t" style="left:1845.59px;top:996.99px;font-size:25.8px;line-height:25.8px;font-weight:normal;color:#aba4c9;z-index:5;transform:scaleX(0.9058);-webkit-text-stroke:0.45px #aba4c9">READ</div><div class="t" style="left:1990.66px;top:996.99px;font-size:25.8px;line-height:25.8px;font-weight:normal;color:#aba4c9;z-index:5;transform:scaleX(0.9429);-webkit-text-stroke:0.45px #aba4c9">+ 3</div><div class="t" style="left:1065.56px;top:1059.46px;font-size:35.5px;line-height:35.5px;font-weight:normal;color:#cdc8df;z-index:5;transform:scaleX(0.9126);-webkit-text-stroke:0.45px #cdc8df">BINDING</div><div class="t" style="left:1845.59px;top:1063.76px;font-size:25.8px;line-height:25.8px;font-weight:normal;color:#aba4c9;z-index:5;transform:scaleX(0.9058);-webkit-text-stroke:0.45px #aba4c9">READ</div><div class="t" style="left:1990.66px;top:1063.76px;font-size:25.8px;line-height:25.8px;font-weight:normal;color:#aba4c9;z-index:5;transform:scaleX(0.9429);-webkit-text-stroke:0.45px #aba4c9">+ 2</div><div class="t" style="left:1065.65px;top:1126.23px;font-size:35.5px;line-height:35.5px;font-weight:normal;color:#cdc8df;z-index:5;transform:scaleX(0.8830);-webkit-text-stroke:0.45px #cdc8df">FLOW</div><div class="t" style="left:1845.59px;top:1130.53px;font-size:25.8px;line-height:25.8px;font-weight:normal;color:#aba4c9;z-index:5;transform:scaleX(0.9058);-webkit-text-stroke:0.45px #aba4c9">READ</div><div class="t" style="left:1990.66px;top:1130.53px;font-size:25.8px;line-height:25.8px;font-weight:normal;color:#aba4c9;z-index:5;transform:scaleX(0.9429);-webkit-text-stroke:0.45px #aba4c9">+ 3</div><div class="t" style="left:1067.45px;top:1193.00px;font-size:35.5px;line-height:35.5px;font-weight:normal;color:#cdc8df;z-index:5;transform:scaleX(0.8524);-webkit-text-stroke:0.45px #cdc8df">SECRET</div><div class="t" style="left:1845.59px;top:1197.30px;font-size:25.8px;line-height:25.8px;font-weight:normal;color:#aba4c9;z-index:5;transform:scaleX(0.9058);-webkit-text-stroke:0.45px #aba4c9">READ</div><div class="t" style="left:1990.66px;top:1197.30px;font-size:25.8px;line-height:25.8px;font-weight:normal;color:#aba4c9;z-index:5;transform:scaleX(0.9429);-webkit-text-stroke:0.45px #aba4c9">+ 3</div><div class="t" style="left:1065.64px;top:1259.77px;font-size:35.5px;line-height:35.5px;font-weight:normal;color:#cdc8df;z-index:5;transform:scaleX(0.8878);-webkit-text-stroke:0.45px #cdc8df">BLUEPRINT</div><div class="t" style="left:1845.59px;top:1264.07px;font-size:25.8px;line-height:25.8px;font-weight:normal;color:#aba4c9;z-index:5;transform:scaleX(0.9058);-webkit-text-stroke:0.45px #aba4c9">READ</div><div class="t" style="left:1990.66px;top:1264.07px;font-size:25.8px;line-height:25.8px;font-weight:normal;color:#aba4c9;z-index:5;transform:scaleX(0.9429);-webkit-text-stroke:0.45px #aba4c9">+ 3</div><div class="t" style="left:1068.30px;top:1326.54px;font-size:35.5px;line-height:35.5px;font-weight:normal;color:#cdc8df;z-index:5;transform:scaleX(0.8576);-webkit-text-stroke:0.45px #cdc8df">WORKER</div><div class="t" style="left:1845.59px;top:1330.84px;font-size:25.8px;line-height:25.8px;font-weight:normal;color:#aba4c9;z-index:5;transform:scaleX(0.9058);-webkit-text-stroke:0.45px #aba4c9">READ</div><div class="t" style="left:1067.20px;top:1393.31px;font-size:35.5px;line-height:35.5px;font-weight:normal;color:#cdc8df;z-index:5;transform:scaleX(0.9000);-webkit-text-stroke:0.45px #cdc8df">TENANT</div><div class="t" style="left:1845.59px;top:1397.61px;font-size:25.8px;line-height:25.8px;font-weight:normal;color:#aba4c9;z-index:5;transform:scaleX(0.9058);-webkit-text-stroke:0.45px #aba4c9">READ</div><div class="t" style="left:1990.66px;top:1397.61px;font-size:25.8px;line-height:25.8px;font-weight:normal;color:#aba4c9;z-index:5;transform:scaleX(0.9429);-webkit-text-stroke:0.45px #aba4c9">+ 3</div><div class="t" style="left:1857.22px;top:629.33px;font-size:35.7px;line-height:35.7px;font-weight:bold;color:#7e17f4;z-index:13;transform:scaleX(0.8878)">READ</div><div class="t" style="left:1858.13px;top:696.73px;font-size:35.7px;line-height:35.7px;font-weight:bold;color:#7e17f4;z-index:13;transform:scaleX(0.8732)">CREATE</div><div class="t" style="left:1857.23px;top:764.83px;font-size:35.7px;line-height:35.7px;font-weight:bold;color:#7e17f4;z-index:13;transform:scaleX(0.8844)">UPDATE</div><div class="t" style="left:1857.25px;top:832.73px;font-size:35.7px;line-height:35.7px;font-weight:bold;color:#7e17f4;z-index:13;transform:scaleX(0.8761)">DELETE</div><div class="t" style="left:165.10px;top:67.63px;font-size:84.10px;line-height:84.10px;font-weight:bold;color:#fff;-webkit-text-stroke:2.2px #fff;transform:scaleX(1.0140)">kestra</div>
<svg width="2898" height="1656" style="z-index:12"><path d="M2181.3,600.3L2194,588.3L2206.7,600.3Z" fill="#111217" stroke="#434659" stroke-width="1.7"/><rect x="2183.2" y="598.2" width="21.6" height="3.6" fill="#111217"/><path d="M2512.7,647.00L2519,654.00L2532,641.00" fill="none" stroke="#7e17f4" stroke-width="1.7"/><path d="M2512.7,714.40L2519,721.40L2532,708.40" fill="none" stroke="#7e17f4" stroke-width="1.7"/><path d="M2512.7,782.50L2519,789.50L2532,776.50" fill="none" stroke="#7e17f4" stroke-width="1.7"/><path d="M2512.7,850.40L2519,857.40L2532,844.40" fill="none" stroke="#7e17f4" stroke-width="1.7"/></svg>
</body></html>
